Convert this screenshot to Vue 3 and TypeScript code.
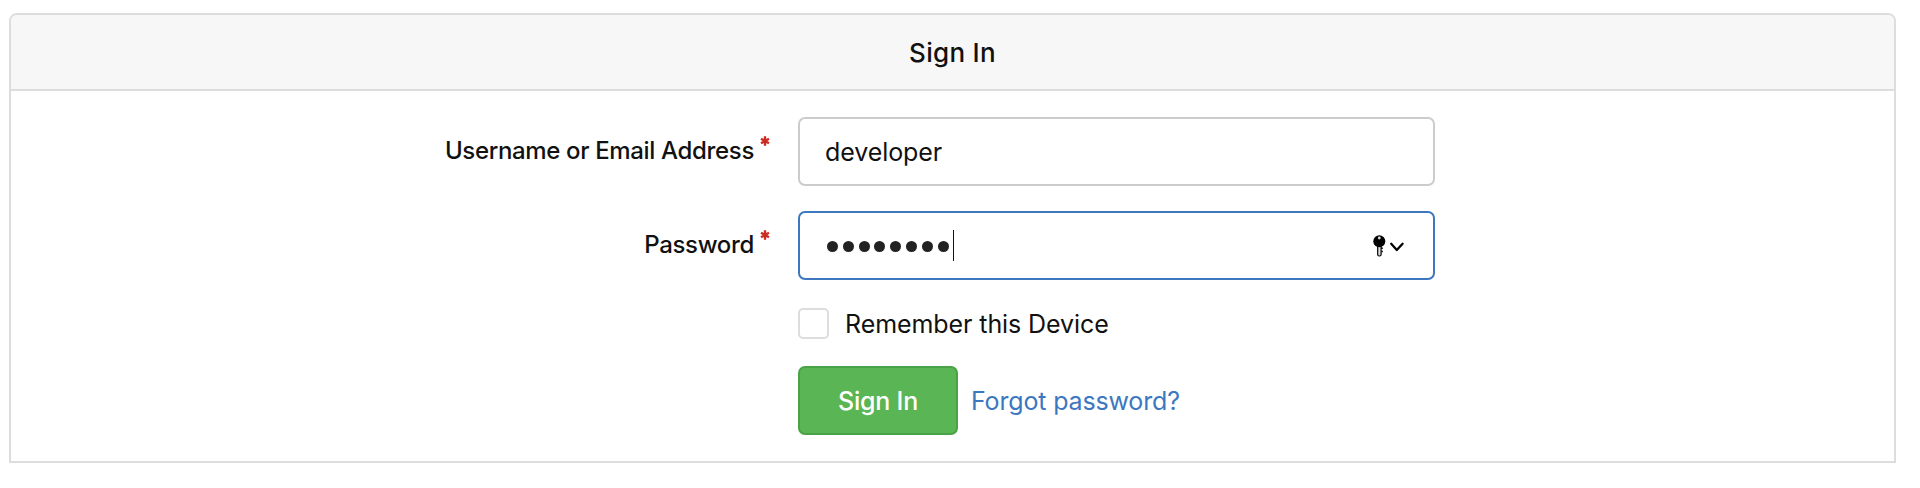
<script setup lang="ts">
import { ref } from 'vue'

const username = ref<string>('developer')
const passwordLength = 8
const remember = ref<boolean>(false)
</script>

<template>
  <main class="page">
    <form class="panel" @submit.prevent>
      <header class="panel-header">
        <h1 class="title">Sign In</h1>
      </header>
      <div class="panel-body">
        <div class="row">
          <label class="label" for="username">
            <span class="label-text">Username or Email Address</span>
            <svg class="required" viewBox="0 0 10 10"><path d="M5 .3v9.4M1 2.7l8 4.6M9 2.7L1 7.3" /></svg>
          </label>
          <input id="username" v-model="username" class="field" type="text" />
        </div>
        <div class="row">
          <div class="label">
            <span class="label-text">Password</span>
            <svg class="required" viewBox="0 0 10 10"><path d="M5 .3v9.4M1 2.7l8 4.6M9 2.7L1 7.3" /></svg>
          </div>
          <div class="field focused">
            <span class="dots"><i v-for="n in passwordLength" :key="n" class="dot"></i></span>
            <span class="caret"></span>
            <svg class="key-icon" viewBox="0 0 32 24">
              <rect x="4.7" y="10" width="3.4" height="12" rx="1.5" fill="#ddd" stroke="#000" stroke-width="1.2" />
              <path d="M8.4 14.2h1.4M8.4 17.6h1.4" stroke="#000" stroke-width="1.5" />
              <circle cx="6.3" cy="7.2" r="6" fill="#000" />
              <circle cx="6.3" cy="4" r="1.4" fill="#ddd" />
              <path d="M18.2 9.8l5.6 6.2 5.8-6.2" fill="none" stroke="#000" stroke-width="2.3" stroke-linecap="round" stroke-linejoin="round" />
            </svg>
          </div>
        </div>
        <label class="remember">
          <input v-model="remember" class="checkbox" type="checkbox" />
          <span>Remember this Device</span>
        </label>
        <div class="actions">
          <button class="submit" type="submit">Sign In</button>
          <a class="forgot" href="#">Forgot password?</a>
        </div>
      </div>
    </form>
  </main>
</template>

<style>
body {
  margin: 0;
  background: #fff;
}
</style>

<style scoped>
.page {
  box-sizing: border-box;
  height: 488px;
  padding: 13px 24px 0 9px;
  font-family: Inter, "Liberation Sans", sans-serif;
  font-size: 25px;
  letter-spacing: -0.08px;
  color: #111;
}
.panel {
  box-sizing: border-box;
  height: 450px;
  border: 2px solid #ddd;
  border-radius: 8px 8px 0 0;
  background: #fff;
}
.panel-header {
  box-sizing: border-box;
  height: 76px;
  display: flex;
  align-items: center;
  justify-content: center;
  border-bottom: 2px solid #ddd;
  border-radius: 6px 6px 0 0;
  background: #f7f7f7;
}
.title {
  margin: 2px 0 0;
  font-size: 26px;
  font-weight: 500;
  line-height: 32px;
  letter-spacing: 0.3px;
}
.panel-body {
  padding-top: 26px;
}
.row {
  display: flex;
  height: 69px;
  margin-bottom: 25px;
}
.label {
  box-sizing: border-box;
  width: 787px;
  padding: 19px 28px 0 0;
  display: flex;
  justify-content: flex-end;
  align-items: flex-start;
  line-height: 30px;
  font-size: 24px;
  font-weight: 500;
  letter-spacing: -0.34px;
}
.required {
  width: 10px;
  height: 10px;
  margin: 0 0 0 6px;
  fill: none;
  stroke: #cb2b22;
  stroke-width: 2.4;
}
.field {
  box-sizing: border-box;
  width: 637px;
  height: 69px;
  padding: 0 26px 0 25px;
  border: 2px solid #ccc;
  border-radius: 7px;
  background: #fff;
  color: #111;
  font: inherit;
  letter-spacing: -0.08px;
  outline: none;
}
.focused {
  display: flex;
  align-items: center;
  border-color: #3c78bf;
}
.dots {
  display: flex;
  gap: 4.8px;
  margin: 1px 0 0 2px;
}
.dot {
  width: 11px;
  height: 11px;
  border-radius: 50%;
  background: #222;
}
.caret {
  width: 1.5px;
  height: 31px;
  margin-left: 4px;
  margin-top: -1px;
  background: #111;
}
.key-icon {
  width: 32px;
  height: 24px;
  margin-left: auto;
  margin-right: 2px;
}
.remember {
  display: flex;
  align-items: center;
  height: 31px;
  margin: 28px 0 27px 787px;
}
.checkbox {
  appearance: none;
  box-sizing: border-box;
  width: 31px;
  height: 31px;
  margin: 0 16px 0 0;
  border: 2px solid #ddd;
  border-radius: 5px;
}
.actions {
  display: flex;
  align-items: center;
  margin-left: 787px;
}
.submit {
  box-sizing: border-box;
  width: 160px;
  height: 69px;
  padding: 0;
  border: 2px solid #49a346;
  border-radius: 7px;
  background: #5ab555;
  color: #fff;
  font: inherit;
  font-weight: 500;
  letter-spacing: -0.2px;
}
.forgot {
  margin-left: 13px;
  color: #3c78bf;
  text-decoration: none;
  letter-spacing: -0.16px;
}
</style>
